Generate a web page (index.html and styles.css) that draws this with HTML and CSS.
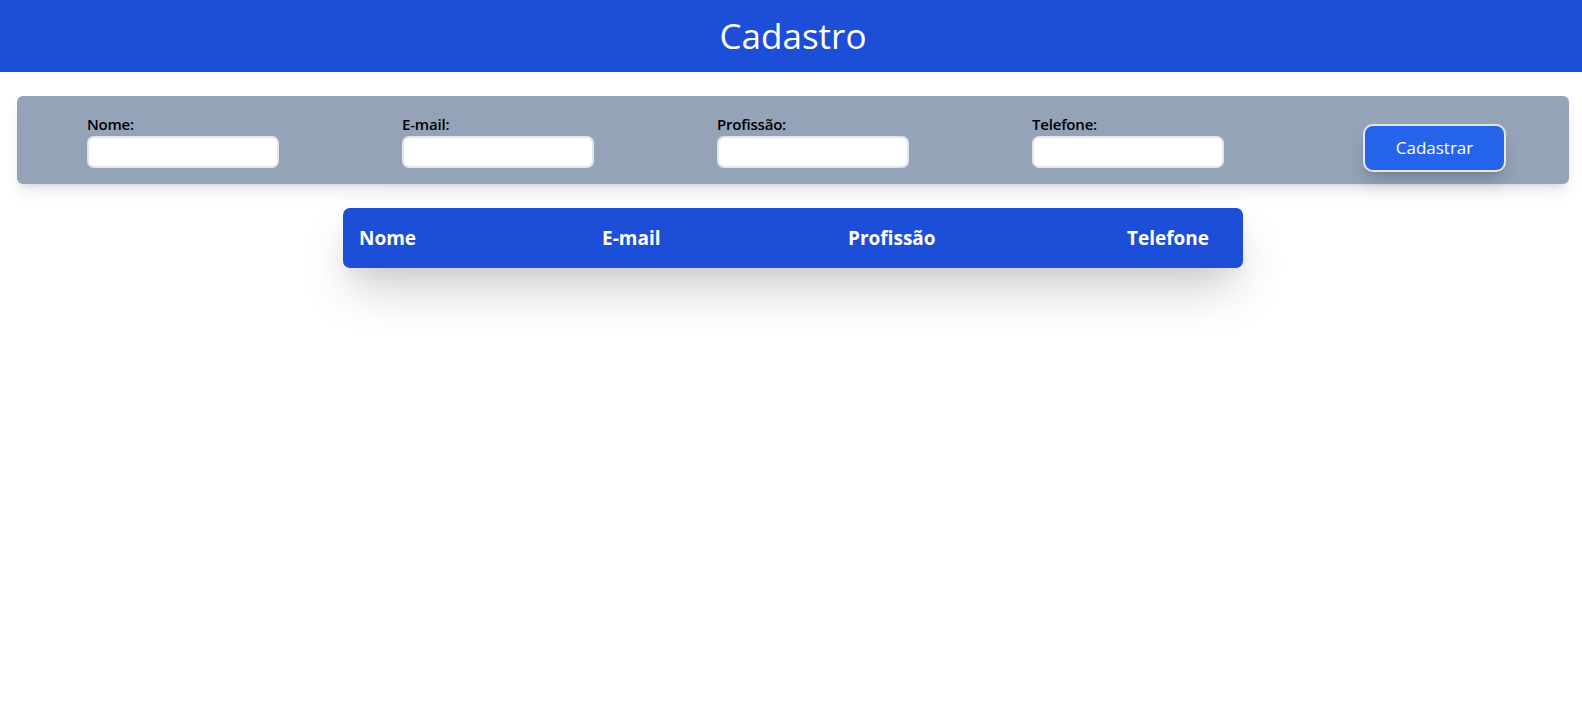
FILE: index.html
```html
<!DOCTYPE html>
<html lang="pt-BR">
<head>
<meta charset="utf-8">
<title>Cadastro</title>
<link rel="stylesheet" href="styles.css">
</head>
<body>
<header class="topbar">
  <h1 class="title">Cadastro</h1>
</header>
<main class="content">
  <form class="form-card">
    <div class="field">
      <label class="field-label" for="nome">Nome:</label>
      <input class="field-input" id="nome" type="text">
    </div>
    <div class="field">
      <label class="field-label" for="email">E-mail:</label>
      <input class="field-input" id="email" type="text">
    </div>
    <div class="field">
      <label class="field-label" for="profissao">Profissão:</label>
      <input class="field-input" id="profissao" type="text">
    </div>
    <div class="field">
      <label class="field-label" for="telefone">Telefone:</label>
      <input class="field-input" id="telefone" type="text">
    </div>
    <button class="submit-btn" type="button">Cadastrar</button>
  </form>
  <div class="table-card">
    <div class="table-head">
      <div class="th">Nome</div>
      <div class="th">E-mail</div>
      <div class="th">Profissão</div>
      <div class="th">Telefone</div>
    </div>
  </div>
</main>
</body>
</html>
```
FILE: styles.css
```css
* {
  box-sizing: border-box;
}

html, body {
  margin: 0;
  padding: 0;
  background: #ffffff;
}

body {
  font-family: "Open Sans", "Noto Sans", "DejaVu Sans", sans-serif;
  color: #000;
  min-height: 100vh;
}

.topbar {
  background: #1d4ed8;
  height: 72px;
  padding: 16px 0 16px 4px;
  display: flex;
  justify-content: center;
  align-items: center;
}

.title {
  margin: 0;
  color: #ffffff;
  font-size: 35px;
  line-height: 40px;
  font-weight: 400;
}

.content {
  min-height: 600px;
  padding: 24px 13px 0 17px;
  display: flex;
  flex-direction: column;
  align-items: center;
}

.form-card {
  align-self: stretch;
  background: #94a3b8;
  border-radius: 6px;
  height: 88px;
  padding: 16px 63px 16px 70px;
  display: flex;
  align-items: flex-start;
  box-shadow: 0 10px 15px -3px rgba(0, 0, 0, 0.1), 0 4px 6px -4px rgba(0, 0, 0, 0.1);
}

.field {
  flex: 0 0 315px;
  display: flex;
  flex-direction: column;
}

.field-label {
  font-size: 15px;
  line-height: 24px;
  font-weight: 600;
  letter-spacing: -0.2px;
}

.field-input {
  width: 192px;
  height: 32px;
  border: 2px solid #e2e5ea;
  border-radius: 7px;
  background: #ffffff;
  padding: 0 8px;
  font: inherit;
  outline: none;
}

.submit-btn {
  margin-left: 16px;
  margin-top: 12px;
  width: 143px;
  height: 48px;
  background: #2563eb;
  color: #ffffff;
  border: 2px solid #e5e7eb;
  border-radius: 10px;
  font-family: inherit;
  font-size: 17px;
  line-height: 28px;
  padding: 8px 0;
  box-shadow: 0 12px 18px -3px rgba(0, 0, 0, 0.16), 0 4px 6px -4px rgba(0, 0, 0, 0.12);
  cursor: pointer;
}

.table-card {
  margin-top: 24px;
  width: 900px;
  background: #1d4ed8;
  border-radius: 7px;
  box-shadow: 0 25px 50px -8px rgba(0, 0, 0, 0.22), 0 10px 20px -6px rgba(0, 0, 0, 0.08);
}

.table-head {
  display: grid;
  grid-template-columns: 243px 246px 279px 1fr;
  height: 60px;
  align-items: center;
}

.th {
  padding-left: 16px;
  color: #ffffff;
  font-size: 19px;
  line-height: 28px;
  font-weight: 700;
}
```
